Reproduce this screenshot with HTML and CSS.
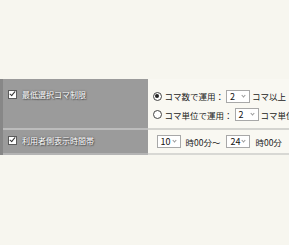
FILE: index.html
```html
<!DOCTYPE html>
<html lang="ja">
<head>
  <meta charset="UTF-8" />
  <title>設定</title>
  <link rel="stylesheet" href="styles.css">
</head>
<body>
  <table class="setting-table">
    <tr class="row-limit">
      <th class="label-cell">
        <label class="check-label"><span class="check-box"></span>最低選択コマ制限</label>
      </th>
      <td class="value-cell">
        <div class="option-line">
          <span class="radio on"></span>コマ数で運用：<span class="sel">2</span>コマ以上
        </div>
        <div class="option-line">
          <span class="radio"></span>コマ単位で運用：<span class="sel">2</span>コマ単位
        </div>
      </td>
    </tr>
    <tr class="row-time">
      <th class="label-cell">
        <label class="check-label"><span class="check-box"></span>利用者側表示時間帯</label>
      </th>
      <td class="value-cell">
        <div class="option-line">
          <span class="sel first">10</span>時00分～<span class="sel">24</span>時00分
        </div>
      </td>
    </tr>
  </table>
</body>
</html>
```

FILE: styles.css
```css
body {
  margin: 0;
  background-color: #f7f6ef;
  font-family: "Noto Sans CJK JP", "Noto Sans", sans-serif;
  color: #1a1a1a;
  overflow: hidden;
}
.setting-table {
  margin-top: 79px;
  border-collapse: collapse;
  width: 330px;
  table-layout: fixed;
}
.label-cell {
  box-sizing: border-box;
  width: 146px;
  background-color: #9b9b9b;
  border-left: 3px solid #878787;
  text-align: left;
  font-weight: normal;
  font-size: 8px;
  vertical-align: top;
  padding: 10px 0 0 5px;
}
.row-limit .label-cell { border-bottom: 2px solid #bcbcbc; height: 50px; }
.row-time .label-cell { border-bottom: 2px solid #b4b4b4; padding-top: 5px; height: 25px; }
.check-label {
  color: #fff;
  text-shadow: 0 0 2px #444, 1px 1px 1px #555;
  display: flex;
  align-items: center;
  white-space: nowrap;
  height: 10px;
}
.check-box {
  flex-shrink: 0;
  width: 7px;
  height: 7px;
  background: #fff;
  border: 1px solid #5c5c5c;
  margin-right: 5px;
  position: relative;
}
.check-box::after {
  content: "";
  position: absolute;
  left: 2px;
  top: -1px;
  width: 2px;
  height: 5px;
  border: solid #333;
  border-width: 0 1.5px 1.5px 0;
  transform: rotate(40deg);
}
.value-cell {
  background-color: #f9f8f2;
  padding: 0 0 0 5px;
  font-size: 8.5px;
  white-space: nowrap;
}
.row-limit .value-cell { border-bottom: 2px solid #d4d4d0; vertical-align: top; padding-top: 8px; }
.row-time .value-cell { border-bottom: 2px solid #d8d8d4; vertical-align: middle; }
.option-line {
  display: flex;
  align-items: center;
  height: 18.5px;
}
.radio {
  flex-shrink: 0;
  width: 7px;
  height: 7px;
  border: 1px solid #444;
  border-radius: 50%;
  background: #fff;
  margin-right: 3px;
  position: relative;
}
.radio.on::after {
  content: "";
  position: absolute;
  left: 1.5px;
  top: 1.5px;
  width: 4px;
  height: 4px;
  border-radius: 50%;
  background: #222;
}
.sel {
  flex-shrink: 0;
  box-sizing: border-box;
  width: 24px;
  height: 13px;
  line-height: 11px;
  border: 1px solid #a8a8a8;
  background: #fff;
  padding-left: 3px;
  margin: 0 2px 0 2px;
  position: relative;
  font-size: 9px;
  color: #111;
}
.sel::after {
  content: "";
  position: absolute;
  right: 4px;
  top: 3px;
  width: 2px;
  height: 2px;
  border: solid #999;
  border-width: 0 1px 1px 0;
  transform: rotate(45deg);
}
.row-time .sel { margin: 0 5px 0 6px; }
.row-time .sel.first { margin-left: 4px; }
```
